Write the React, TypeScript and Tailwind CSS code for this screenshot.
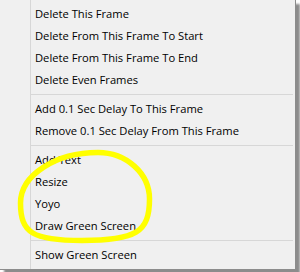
import React from "react";

type Entry = { label: string } | { sep: number };

const entries: Entry[] = [
  { label: "Delete This Frame" },
  { label: "Delete From This Frame To Start" },
  { label: "Delete From This Frame To End" },
  { label: "Delete Even Frames" },
  { sep: 7 },
  { label: "Add 0.1 Sec Delay To This Frame" },
  { label: "Remove 0.1 Sec Delay From This Frame" },
  { sep: 7 },
  { label: "Add Text" },
  { label: "Resize" },
  { label: "Yoyo" },
  { label: "Draw Green Screen" },
  { sep: 7 },
  { label: "Show Green Screen" },
];

export default function App() {
  return (
    <div className="relative w-[300px] h-[272px] bg-white overflow-hidden">
      <div className="flex w-[296px] h-[270px] bg-[#f0f0f0] border-r border-b border-[#8c8c8c] shadow-[4px_4px_2px_rgba(0,0,0,0.45)]">
        <div className="w-[31px] shrink-0 border-r border-[#d7d7d7]" />
        <div
          className="flex-1 flex flex-col pt-[3px] text-[11.2px] text-black"
          style={{ fontFamily: '"Open Sans", "Noto Sans", sans-serif' }}
        >
          {entries.map((e, i) =>
            "label" in e ? (
              <div key={i} className="h-[22px] flex items-center pl-[4px] whitespace-nowrap leading-none">
                {e.label}
              </div>
            ) : (
              <div key={i} className="h-[7px] flex items-center pr-[2px]">
                <div className="h-px w-full bg-[#d7d7d7]" />
              </div>
            )
          )}
        </div>
      </div>
      <svg className="absolute inset-0 pointer-events-none" width="300" height="272" viewBox="0 0 300 272">
        <path
          d="M20.5 203 C20.5 175.2 55.4 152.5 98 152.5 C126.3 152.5 149.5 173.4 149.5 199 C149.5 232.2 136 240.5 82 240.5 C32.8 240.5 20.5 233 20.5 203 Z"
          fill="none"
          stroke="#ffff00"
          strokeWidth="5.5"
        />
      </svg>
    </div>
  );
}
